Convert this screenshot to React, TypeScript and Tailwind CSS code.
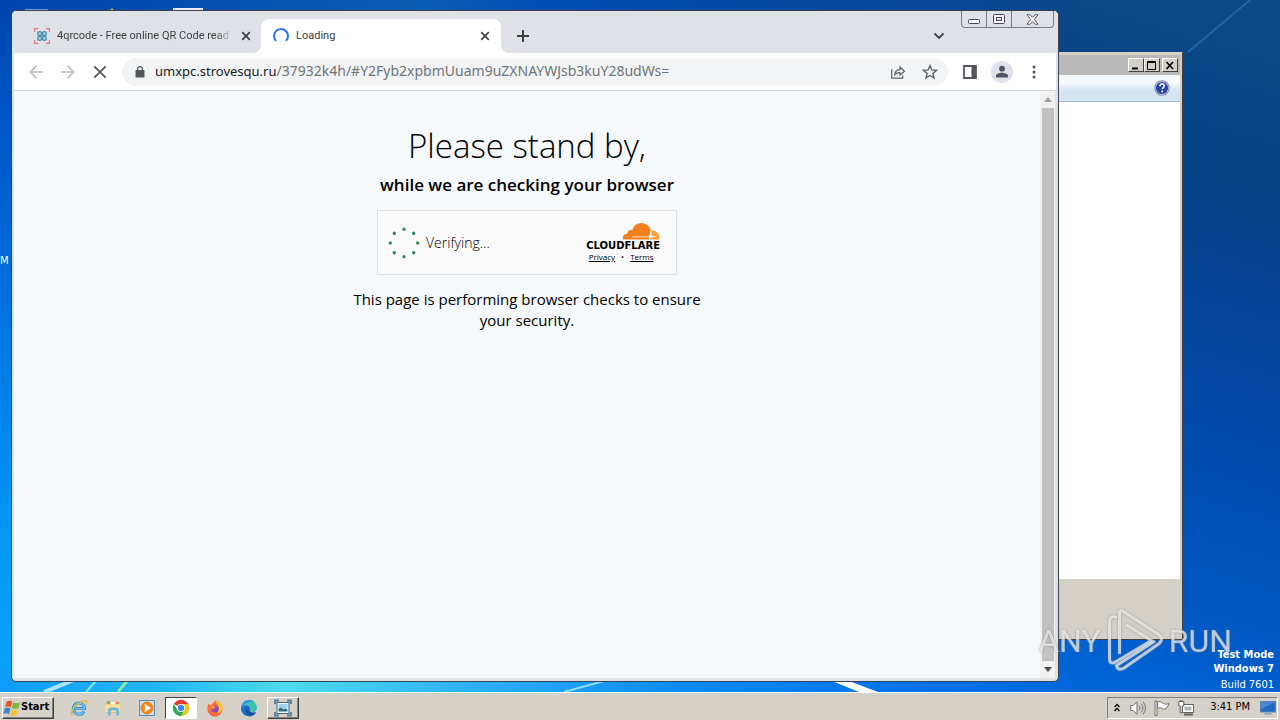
import React from "react";

const ui = "font-['Noto_Sans','Open_Sans',sans-serif]";
const tahoma = "font-['DejaVu_Sans_Condensed','DejaVu_Sans',sans-serif]";

function Wallpaper() {
  return (
    <svg className="absolute inset-0 h-full w-full" viewBox="0 0 1280 692" preserveAspectRatio="none" aria-hidden="true">
      <defs>
        <linearGradient id="sky" x1="0" y1="0" x2="0" y2="1">
          <stop offset="0" stopColor="#0045ad" />
          <stop offset="0.35" stopColor="#0068d8" />
          <stop offset="0.75" stopColor="#0096f5" />
          <stop offset="1" stopColor="#08a4fb" />
        </linearGradient>
        <linearGradient id="floor" x1="0" y1="0" x2="1" y2="0">
          <stop offset="0" stopColor="#0d9bf8" />
          <stop offset="0.15" stopColor="#22b8f2" />
          <stop offset="0.27" stopColor="#4bdcec" />
          <stop offset="0.45" stopColor="#2bb0f4" />
          <stop offset="0.65" stopColor="#0a8af5" />
          <stop offset="0.85" stopColor="#0074ea" />
          <stop offset="1" stopColor="#0069de" />
        </linearGradient>
        <linearGradient id="east" gradientUnits="userSpaceOnUse" x1="1280" y1="60" x2="1080" y2="720">
          <stop offset="0" stopColor="#0c4787" />
          <stop offset="0.2" stopColor="#044185" />
          <stop offset="0.45" stopColor="#0347a2" />
          <stop offset="0.8" stopColor="#0057c2" />
          <stop offset="1" stopColor="#006ce2" />
        </linearGradient>
        <linearGradient id="north" x1="0" y1="0" x2="1" y2="0">
          <stop offset="0" stopColor="#0045ad" />
          <stop offset="0.4" stopColor="#0a5bb2" />
          <stop offset="0.5" stopColor="#0150b4" />
          <stop offset="0.7" stopColor="#034aa4" />
          <stop offset="1" stopColor="#07478c" />
        </linearGradient>
      </defs>
      <rect width="1280" height="692" fill="url(#sky)" />
      <rect x="1000" width="280" height="692" fill="url(#east)" />
      <rect width="1060" height="14" fill="url(#north)" />
      <rect y="670" width="1060" height="22" fill="url(#floor)" />
      <path d="M1188 52 1250 0" stroke="#3f7fc0" strokeWidth="2" opacity="0.5" />
      <path d="M44 692 74 680" stroke="#d8f4ff" strokeWidth="4" opacity="0.8" />
      <path d="M86 692 96 681" stroke="#8fe6fa" strokeWidth="2" />
      <path d="M118 692 127 681" stroke="#8be99b" strokeWidth="3" />
      <path d="M564 692 604 681" stroke="#8fdcff" strokeWidth="2" />
      <path d="M832 681h17l29 11h-19z" fill="#fff" />
      <rect x="25" y="9" width="23" height="3" fill="#6f9bd0" />
      <path d="M109 11 112 8l3 3z" fill="#e0a050" />
      <rect x="173" y="8" width="30" height="4" fill="#e8eef4" />
    </svg>
  );
}

function ClassicButton({ label, children }: { label: string; children: React.ReactNode }) {
  return (
    <button
      aria-label={label}
      className="flex h-3.5 w-4 items-center justify-center border border-t-white border-r-[#404040] border-b-[#404040] border-l-white bg-[#d4d0c8]"
    >
      <svg width="12" height="11" viewBox="0 0 12 11" fill="none" stroke="#000">
        {children}
      </svg>
    </button>
  );
}

function BackWindow() {
  return (
    <section className="absolute top-[52px] left-[640px] flex h-[588px] w-[543px] flex-col border border-t-[#d4d0c8] border-r-[#404040] border-b-[#404040] border-l-[#d4d0c8] bg-[#d4d0c8] p-0.5">
      <header className="flex h-5 items-center justify-end bg-[#b9b9b9] pr-0.5">
        <ClassicButton label="Minimize">
          <path d="M2 8.5h6" strokeWidth="2" />
        </ClassicButton>
        <ClassicButton label="Maximize">
          <path d="M1.5 1.5h8v8h-8zM1 2.5h9" />
        </ClassicButton>
        <span className="w-0.5" />
        <ClassicButton label="Close window">
          <path d="M2.5 2 9 9M9 2 2.500 9" strokeWidth="1.6" />
        </ClassicButton>
      </header>
      <div className="flex h-[27px] items-center justify-end border-b border-[#a3b6cb] bg-linear-to-b from-[#f4f9fe] from-30% to-[#d5e4f3] to-60% pr-2.5">
        <button aria-label="Help">
          <svg width="16" height="16" viewBox="0 0 16 16">
            <circle cx="8" cy="8" r="7.700" fill="#7d87a6" />
            <circle cx="8" cy="8" r="6.700" fill="#c9d3ec" />
            <circle cx="8" cy="8" r="6.100" fill="#2743a8" />
            <path d="M5.900 6.300c0-1.500 1-2.200 2.200-2.200s2.200.8 2.200 2c0 1.500-2 1.600-2 3.200" fill="none" stroke="#fff" strokeWidth="1.500" />
            <circle cx="8.200" cy="11.400" r="0.950" fill="#fff" />
          </svg>
        </button>
      </div>
      <div className="flex-1 bg-white" />
      <div className="h-[58px]" />
    </section>
  );
}

function CloseX() {
  return (
    <svg width="10" height="10" viewBox="0 0 10 10" stroke="currentColor" strokeWidth="1.700" fill="none">
      <path d="m1.200 1.200 7.600 7.600M8.800 1.200 1.200 8.800" />
    </svg>
  );
}

function TabStrip() {
  return (
    <header className="flex h-[42px] items-end bg-[#dee1e6] pr-0.5 font-[Roboto,sans-serif] text-[11px] text-[#3c4043]">
      <div className="flex h-[34px] w-[247px] items-center pr-2.5 pl-5">
        <svg width="16" height="16" viewBox="0 0 16 16" fill="none" className="shrink-0">
          <path d="M.7 4V.7H4M12 .7h3.300V4M15.300 12v3.300H12M4 15.300H.7V12" stroke="#e0728a" strokeWidth="1.200" />
          <g stroke="#4d8fae" strokeWidth="1.300" fill="#a9cfe0">
            <circle cx="5.700" cy="5.700" r="2" />
            <circle cx="10.300" cy="5.700" r="2" />
            <circle cx="5.700" cy="10.300" r="2" />
            <circle cx="10.300" cy="10.300" r="2" />
          </g>
        </svg>
        <span className="ml-[7px] flex-1 mask-r-from-90% whitespace-nowrap">4qrcode - Free online QR Code read</span>
        <button aria-label="Close 4qrcode tab" className="ml-2">
          <CloseX />
        </button>
      </div>
      <div className="relative flex h-[34px] w-60 items-center rounded-t-lg bg-white pr-[11px] pl-3">
        <svg className="absolute bottom-0 -left-2" width="8" height="8" viewBox="0 0 8 8">
          <path d="M8 0v8H0a8 8 0 0 0 8-8" fill="#fff" />
        </svg>
        <svg className="absolute -right-2 bottom-0" width="8" height="8" viewBox="0 0 8 8">
          <path d="M0 0v8h8a8 8 0 0 1-8-8" fill="#fff" />
        </svg>
        <svg width="16" height="16" viewBox="0 0 16 16" fill="none" stroke="#2a74e6" strokeWidth="2">
          <path d="M3.200 13.100A7 7 0 1 1 13 12.900" />
        </svg>
        <span className="ml-[7px] flex-1">Loading</span>
        <button aria-label="Close Loading tab">
          <CloseX />
        </button>
      </div>
      <button aria-label="New tab" className="mb-[11px] ml-4">
        <svg width="12" height="12" viewBox="0 0 12 12" stroke="currentColor" strokeWidth="2">
          <path d="M6 0v12M0 6h12" />
        </svg>
      </button>
      <span className="flex-1" />
      <button aria-label="Search tabs" className="mr-4 mb-[13px]">
        <svg width="12" height="8" viewBox="0 0 12 8" stroke="currentColor" strokeWidth="1.800" fill="none">
          <path d="m1.500 1.500 4.500 4.500 4.500-4.500" />
        </svg>
      </button>
      <div className="flex h-[17px] self-start rounded-b border border-t-0 border-[#777a80]">
        <button aria-label="Minimize browser" className="flex w-[25px] items-end justify-center border-r border-[#777a80] pb-[3px]">
          <svg width="12" height="5" viewBox="0 0 12 5">
            <rect x="0.5" y="0.5" width="11" height="4" rx="1" fill="#fff" stroke="#4c4555" />
          </svg>
        </button>
        <button aria-label="Maximize browser" className="flex w-[25px] items-center justify-center border-r border-[#777a80]">
          <svg width="12" height="10" viewBox="0 0 12 10">
            <rect x="0.5" y="0.5" width="11" height="9" rx="1" fill="#fff" stroke="#4c4555" />
            <rect x="3.500" y="3.500" width="5" height="3" fill="#dee1e6" stroke="#4c4555" />
          </svg>
        </button>
        <button aria-label="Close browser" className="flex w-[41px] items-center justify-center">
          <svg width="13" height="11" viewBox="0 0 13 11">
            <path d="M1 .8h3l2.500 2.500L9 .8h3L8.400 5.500 12 10.200H9L6.500 7.700 4 10.200H1l3.600-4.700z" fill="#fff" stroke="#4c4555" strokeWidth="0.900" />
          </svg>
        </button>
      </div>
    </header>
  );
}

function Toolbar() {
  return (
    <div className="flex h-[38px] items-center border-b border-[#d6d8dc] bg-white pr-5 pl-[15px]">
      <button aria-label="Back" className="text-[#b9bbbe]">
        <svg width="14" height="14" viewBox="0 0 14 14" fill="none" stroke="currentColor" strokeWidth="1.700">
          <path d="M14 7H1.500M7.500.8 1.300 7l6.200 6.200" />
        </svg>
      </button>
      <button aria-label="Forward" className="ml-[18px] text-[#b9bbbe]">
        <svg width="14" height="14" viewBox="0 0 14 14" fill="none" stroke="currentColor" strokeWidth="1.700">
          <path d="M0 7h12.500M6.500.8 12.700 7l-6.200 6.200" />
        </svg>
      </button>
      <button aria-label="Stop loading" className="ml-[18px] text-[#54585c]">
        <svg width="14" height="14" viewBox="0 0 14 14" fill="none" stroke="currentColor" strokeWidth="1.800">
          <path d="m1.300 1.300 11.400 11.400M12.700 1.300 1.300 12.700" />
        </svg>
      </button>
      <div className="ml-[15px] flex h-7 flex-1 items-center rounded-full bg-[#f1f3f4] pr-2.5 pl-[13px]">
        <svg width="10" height="12" viewBox="0 0 10 12">
          <rect x="0.500" y="4" width="9" height="7.500" rx="0.800" fill="#54585c" />
          <path d="M2.600 4.500V3a2.400 2.400 0 0 1 4.800 0v1.500" fill="none" stroke="#54585c" strokeWidth="1.200" />
        </svg>
        <span className="ml-2.5 flex-1 text-[13px] whitespace-nowrap text-[#202124]">
          umxpc.strovesqu.ru
          <span className="text-sm leading-none text-[#70757a]">/37932k4h/#Y2Fyb2xpbmUuam9uZXNAYWJsb3kuY28udWs=</span>
        </span>
        <button aria-label="Share" className="text-[#5f6368]">
          <svg width="16" height="16" viewBox="0 0 16 16" fill="none" stroke="currentColor" strokeWidth="1.200">
            <path d="M1.700 5.300v8.900h11v-3M4.800 10.600c.3-3.400 2.400-5 5.200-5V3l4.500 4.200-4.500 4V8.600c-2.400-.1-3.900.4-5.200 2z" />
          </svg>
        </button>
        <button aria-label="Bookmark this page" className="ml-4 text-[#5f6368]">
          <svg width="16" height="16" viewBox="0 0 16 16" fill="none" stroke="currentColor" strokeWidth="1.400">
            <path d="m8 1.600 1.800 4.300 4.700.4-3.600 3.100 1.100 4.600L8 11.500 4 14l1.100-4.600-3.600-3.100 4.700-.4z" />
          </svg>
        </button>
      </div>
      <button aria-label="Side panel" className="ml-[15px] text-[#54585c]">
        <svg width="14" height="14" viewBox="0 0 14 14">
          <path d="M1 1h12v12H1z" fill="none" stroke="currentColor" strokeWidth="1.800" />
          <path d="M8.500 1H13v12H8.500z" fill="currentColor" />
        </svg>
      </button>
      <button aria-label="Profile" className="ml-3.5 text-[#505566]">
        <svg width="22" height="22" viewBox="0 0 22 22">
          <circle cx="11" cy="11" r="11" fill="#dee1e8" />
          <circle cx="11" cy="7.700" r="2.900" fill="currentColor" />
          <path d="M5 16.500v-1.800c0-2 3.500-3 6-3s6 1 6 3v1.800z" fill="currentColor" />
        </svg>
      </button>
      <button aria-label="Menu" className="ml-[19px] text-[#54585c]">
        <svg width="4" height="14" viewBox="0 0 4 14" fill="currentColor">
          <circle cx="2" cy="2" r="1.500" />
          <circle cx="2" cy="7" r="1.500" />
          <circle cx="2" cy="12" r="1.500" />
        </svg>
      </button>
    </div>
  );
}

const dots = [0, 45, 90, 135, 180, 225, 270, 315];

function CheckPage() {
  return (
    <main className="flex flex-1 flex-col items-center bg-[#f5f9fc] pt-8 font-['Open_Sans',sans-serif] text-black">
      <h1 className="text-[33px] leading-[46px] font-light">Please stand by,</h1>
      <h2 className="mt-1 text-[17px] leading-6 font-semibold">while we are checking your browser</h2>
      <div className="mt-[13px] flex h-[65px] w-[300px] items-center border border-[#dedfe0] bg-[#fafafa] pr-4 pl-2.5">
        <svg width="32" height="32" viewBox="0 0 32 32" fill="#36895c">
          {dots.map((a) => (
            <circle key={a} cx="16" cy="2.300" r="1.700" transform={`rotate(${a} 16 16)`} />
          ))}
        </svg>
        <span className="ml-1.5 flex-1 text-sm font-light">Verifying...</span>
        <div className="flex flex-col items-end">
          <svg width="38" height="18" viewBox="0 0 38 18">
            <path
              d="M1 17.500c-.8-3 1-5.600 4.300-5.800C5.200 8.900 8 7.200 10.300 8.300 11.400 3.500 15.300.7 19.800.9c4.600.2 8 3.400 9.300 7.800l-2.300 8.800z"
              fill="#f4801f"
            />
            <path d="M28.800 8.500c4.500-.3 8.300 2.400 8.400 6.600 0 .9-.1 1.600-.3 2.400H26z" fill="#f9a03c" />
            <path d="M10 14.400h17l2-6.300.8 5.600 5 .6-5 .9-3.300 2.300.6-2.300H10z" fill="#fff" />
          </svg>
          <span className="font-['DejaVu_Sans',sans-serif] text-[10px] leading-[11px] font-bold">CLOUDFLARE</span>
          <div className="flex w-full items-center justify-center gap-1.5 pr-1 text-[8px] leading-3">
            <a href="#privacy" className="underline">Privacy</a>
            <span>•</span>
            <a href="#terms" className="underline">Terms</a>
          </div>
        </div>
      </div>
      <p className="mt-3.5 max-w-[360px] text-center text-[15px] leading-[21px]">
        This page is performing browser checks to ensure your security.
      </p>
    </main>
  );
}

function Browser() {
  return (
    <section className={`absolute top-2.5 left-[11px] flex h-[672px] w-[1048px] flex-col overflow-hidden rounded-[5px] border border-[#3b4350] bg-[#dee1e6] px-0.5 pb-[3px] ${ui}`}>
      <TabStrip />
      <Toolbar />
      <div className="flex flex-1 pr-px">
        <CheckPage />
        <div className="flex w-[15px] flex-col items-center justify-between bg-[#f1f1f1] py-1.5">
          <svg width="8" height="5" viewBox="0 0 8 5" fill="#a0a0a0">
            <path d="M4 0 8 5H0z" />
          </svg>
          <span className="my-1.5 w-3 flex-1 bg-[#c1c1c1]" />
          <svg width="8" height="5" viewBox="0 0 8 5" fill="#4c4c4c">
            <path d="M4 5 8 0H0z" />
          </svg>
        </div>
      </div>
    </section>
  );
}

function Watermark() {
  return (
    <div className="absolute right-12 bottom-4 flex items-center font-[Roboto,sans-serif] text-[32px] leading-[70px] text-white/65">
      <span className="drop-shadow-[0_0_1px_#777]">ANY</span>
      <svg
        width="60"
        height="66"
        viewBox="0 0 60 66"
        className="mx-1 drop-shadow-[0_0_1px_#777]"
        fill="none"
        stroke="#fff"
        strokeOpacity="0.65"
        strokeWidth="3"
        strokeLinejoin="round"
      >
        <path d="M12 9.500C8 7.500 4.500 9.500 4.500 14v37c0 4 3 5 6 3l36-21.500L21 16.500" />
        <path d="M14.500 46V5c0-2 2-3 4-1.500l35 23c4 3 4 6.500 0 9.500L19 60c-4 2.500-7 1-7.500-2.500L50 33" />
      </svg>
      <span className="drop-shadow-[0_0_1px_#777]">RUN</span>
    </div>
  );
}

function WinFlag() {
  return (
    <svg width="18" height="18" viewBox="0 0 16 16" className="shrink-0">
      <path d="M3.300 2.300c2-1.200 3.500-.9 5 .1L6.900 7.500c-1.500-1-3-1.200-5-.2z" fill="#e8582a" />
      <path d="M9.200 2.900c1.900 1 3.800 1 6 0L13.800 8c-2 1-4 1-6 0z" fill="#79b83d" />
      <path d="M1.600 8.300c2-1 3.500-.7 5 .2L5.200 13.600c-1.500-1-3-1.200-5-.2z" fill="#3e84cf" />
      <path d="M7.500 9c1.900 1 3.800 1 6 0l-1.400 5.100c-2 1-4 1-6 0z" fill="#f5c031" />
    </svg>
  );
}

function IconIE() {
  return (
    <svg width="18" height="18" viewBox="0 0 18 18" fill="none">
      <path d="M14 12.200A5.600 5.600 0 1 1 14.600 9.600H5" stroke="#2f8fd0" strokeWidth="3" />
      <path d="M14 12.200A5.600 5.600 0 1 1 14.600 9.600H5" stroke="#7cc8f0" strokeWidth="1.400" />
      <path d="M2.800 16.200C-.5 15 2.500 9 8 5c4-3 8.500-4.500 9-2.500.3 1-.5 2.300-1.500 3.600" stroke="#e3b53a" strokeWidth="1.300" />
    </svg>
  );
}

function IconFolder() {
  return (
    <svg width="18" height="18" viewBox="0 0 18 18">
      <path d="M2 3.500h5V2.500h7v1.500h2.500V14H2z" fill="#e3bf62" />
      <path d="M3 2h3v3H3z" fill="#6fb25f" />
      <path d="M7 3h4v2.500H7z" fill="#fff" />
      <path d="M12 3h3v2h-3z" fill="#e08a5a" />
      <path d="M1.500 5.500h15V13h-15z" fill="#f6e09a" />
      <path d="M4 16.500v-5C4 9 6 8.500 9.500 8.500S15 9 15 11.500v5h-2.700v-4c0-1-1-1.200-2.800-1.200s-2.800.2-2.800 1.200v4z" fill="#6fb6dc" />
    </svg>
  );
}

function IconPlayer() {
  return (
    <svg width="18" height="18" viewBox="0 0 18 18">
      <rect x="1.500" y="1.500" width="15" height="15" fill="#c8e2f2" stroke="#568fb8" />
      <circle cx="9" cy="9" r="6.500" fill="#f0851d" />
      <path d="M6.800 4.800 13 9l-6.200 4.200z" fill="#fff" />
    </svg>
  );
}

function IconChrome() {
  return (
    <svg width="18" height="18" viewBox="0 0 18 18">
      <path d="M9 9 1.900 4.900A8.200 8.200 0 0 1 16.100 4.900H9z" fill="#e33b2e" />
      <path d="M9 9V4.900h7.100A8.200 8.200 0 0 1 9 17.200l3.600-6.100z" fill="#fbc116" />
      <path d="M9 9l3.600 2.100L9 17.200A8.200 8.200 0 0 1 1.900 4.900L5.400 11z" fill="#2da94f" />
      <circle cx="9" cy="9" r="4.100" fill="#fff" />
      <circle cx="9" cy="9" r="3.200" fill="#4285f4" />
    </svg>
  );
}

function IconFirefox() {
  return (
    <svg width="18" height="18" viewBox="0 0 18 18">
      <path d="M2.500 4.500 4 6l2-.5C7 3.500 9 2.500 10 1c2 1 3 2.500 3.500 4l1-1c1.500 2 2 4 2 6A7.500 7.500 0 0 1 1.500 10c0-2 .3-4 1-5.500z" fill="#fb6f3a" />
      <path d="M10 1c2 1 3 2.500 3.500 4l1-1c1.500 2 2 4 2 6-1 3-3 4-5 4 2-3 2-6 0-8-1-1.500-2-3-1.500-5z" fill="#fdc530" />
      <path d="M1.700 9c0 5 5 8.500 9.500 8A7.500 7.500 0 0 1 1.700 9z" fill="#e8344f" />
      <circle cx="9" cy="10" r="3.600" fill="#8a4bc0" />
      <path d="M4.500 7.500c2.500-1 4.500 0 5.500 1-2 .3-2.500 1-3 2.500z" fill="#fb923a" />
    </svg>
  );
}

function IconEdge() {
  return (
    <svg width="18" height="18" viewBox="0 0 18 18">
      <path d="M1 9a8 8 0 0 1 16 0c0 2.500-2 4-4.200 4-1.500 0-2.600-.7-2.300-1.700C11.300 8 9.500 6.300 6.800 6.300 4 6.300 2 7.300 1 9z" fill="#3bc3b0" />
      <path d="M1 9c.3-4.500 4-8 8-8 2 0 4 .6 5.500 2C10 2 4 4 1 9z" fill="#2a9bdc" />
      <path d="M1 9.500C1.500 7 4 6 6.500 6.200 9 6.500 10.500 8 10.500 10c-1.300 2.500 1.500 4.500 5.500 3.200A8 8 0 0 1 1 9.500z" fill="#1a6fc8" />
      <path d="M6.500 8.500C4.500 11 6 15.500 10.500 16.700c2.500-.3 4.300-1.600 5.500-3.500-3.500 1.500-8.500 0-9.500-4.700z" fill="#124f9e" />
    </svg>
  );
}

function IconPicture() {
  return (
    <svg width="18" height="18" viewBox="0 0 18 18">
      <path d="M1 5V1.500h4M13 1.500h4V5M17 13v3.500h-4M5 16.500H1V13" fill="none" stroke="#4f7f9f" strokeWidth="1.800" />
      <rect x="3" y="3.500" width="12" height="11" fill="#f4fafc" stroke="#40647e" />
      <path d="M4.500 5h9v4.500h-9z" fill="#9dd2ec" />
      <path d="M4.500 12.500V9.800l2.500-1.300 2.500 1.800 2-.8 2 1.300v1.700z" fill="#2f6d85" />
    </svg>
  );
}

const apps = [
  { name: "Internet Explorer", icon: <IconIE /> },
  { name: "Windows Explorer", icon: <IconFolder /> },
  { name: "Media Player", icon: <IconPlayer /> },
  { name: "Google Chrome", icon: <IconChrome />, state: "active" },
  { name: "Firefox", icon: <IconFirefox /> },
  { name: "Microsoft Edge", icon: <IconEdge /> },
  { name: "Photo Viewer", icon: <IconPicture />, state: "open" },
];

const appStyle: Record<string, string> = {
  active: "border-t-[#404040] border-l-[#404040] border-r-white border-b-white bg-white",
  open: "border-t-white border-l-white border-r-[#404040] border-b-[#404040] shadow-[inset_-1px_-1px_0_#808080]",
  idle: "border-transparent",
};

function Taskbar() {
  return (
    <footer className={`relative flex h-7 shrink-0 items-center border-t border-white bg-[#d5d0c8] px-0.5 pt-0.5 text-[11px] text-black ${tahoma}`}>
      <button className="flex h-[22px] w-[52px] items-center border border-t-white border-r-[#404040] border-b-[#404040] border-l-white font-bold shadow-[inset_-1px_-1px_0_#808080]">
        <WinFlag />
        Start
      </button>
      <nav className="ml-[9px] flex gap-0.5">
        {apps.map((app) => (
          <button key={app.name} aria-label={app.name} className={`flex h-[22px] w-8 items-center justify-center border ${appStyle[app.state ?? "idle"]}`}>
            {app.icon}
          </button>
        ))}
      </nav>
      <span className="flex-1" />
      <div className="flex h-[22px] items-center border border-t-[#808080] border-r-white border-b-white border-l-[#808080] pr-px pl-1.5">
        <button aria-label="Show hidden icons">
          <svg width="6" height="9" viewBox="0 0 6 9" fill="none" stroke="#000" strokeWidth="1.300">
            <path d="M.6 4 3 1.400 5.400 4M.6 8 3 5.400 5.400 8" />
          </svg>
        </button>
        <svg className="ml-2.5" width="16" height="16" viewBox="0 0 16 16" fill="none" stroke="#707070">
          <path d="M.8 5.500h2.500L7 1.800v12.400l-3.700-3.700H.8z" fill="#fff" />
          <path d="M9 5.500c1.300 1.500 1.300 3.500 0 5M11 3.500c2.500 2.500 2.500 6.500 0 9M13 1.800c3.200 3.500 3.200 8.900 0 12.400" />
        </svg>
        <svg className="ml-2" width="16" height="16" viewBox="0 0 16 16" stroke="#707070" fill="#fff">
          <path d="M1 1h2v14.500H1z" />
          <path d="M3.500 2c2-1 4-.5 5 1 2 1.500 4 1.500 6.500.5-1 2.500-2 4.500-4 5.500-1.500.5-3-.5-4-1-1.200-.5-2.500-.3-3.500.5z" />
        </svg>
        <svg className="ml-2" width="16" height="16" viewBox="0 0 16 16" stroke="#606060" fill="#fff">
          <path d="M4.500 4.500h11v8h-11z" />
          <path d="M6.500 6.500h7v4h-7z" fill="#aeb2b4" stroke="none" />
          <path d="M6 14.500h9" strokeWidth="2" />
          <path d="M.8 1.500h5V6H4.300v7h-2V6H.8zM2.300 0v2M4.300 0v2" />
        </svg>
        <time className="ml-4">3:41 PM</time>
        <button aria-label="Show desktop" className="ml-2.5">
          <svg width="16" height="14" viewBox="0 0 16 14">
            <rect x="0.500" y="0.500" width="15" height="10.500" fill="#2368c4" stroke="#5b84b4" />
            <path d="M1 1h14L1 8z" fill="#4a86d8" />
            <path d="M5 12h6l1 1.500H4z" fill="#7b9dc4" />
          </svg>
        </button>
      </div>
    </footer>
  );
}

export default function App() {
  return (
    <div className="flex h-screen flex-col overflow-hidden bg-[#0058c0]">
      <div className="relative flex-1 overflow-hidden">
        <Wallpaper />
        <span className={`absolute top-[254px] left-0 text-[11px] leading-[14px] text-white ${tahoma}`}>M</span>
        <BackWindow />
        <Browser />
        <Watermark />
        <div className={`absolute right-1.5 bottom-0 text-right text-[11px] leading-[14px] text-white ${tahoma}`}>
          <p className="font-bold">Test Mode</p>
          <p className="font-bold">Windows 7</p>
          <p className="mt-0.5">Build 7601</p>
        </div>
      </div>
      <Taskbar />
    </div>
  );
}
